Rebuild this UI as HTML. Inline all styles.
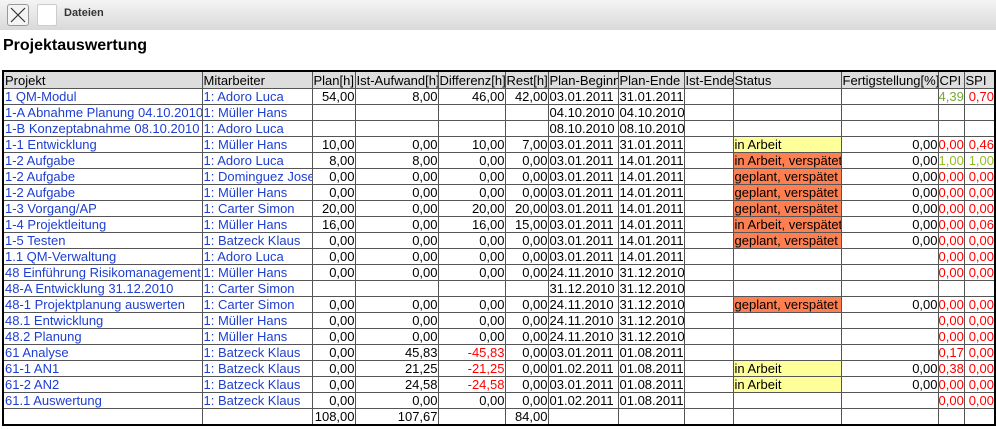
<!DOCTYPE html>
<html><head><meta charset="utf-8"><style>
body{margin:0;width:996px;height:429px;overflow:hidden;background:#fff;font-family:"Liberation Sans",sans-serif;}
.tb{position:absolute;left:0;top:0;width:996px;height:30px;background:linear-gradient(#f4f4f4,#d9d9d9);}
.x{position:absolute;left:7px;top:4px;width:20px;height:20px;border:1px solid #999;border-radius:3px;background:#f4f4f4;}
.w{position:absolute;left:37px;top:4px;width:18px;height:20px;border:1px solid #ccc;border-radius:2px;background:#fff;}
.dt{position:absolute;left:64px;top:7px;font-size:11px;font-weight:bold;color:#333;}
h1{position:absolute;left:3px;top:37px;margin:0;font-size:16px;font-weight:bold;}
table{position:absolute;left:2px;top:70px;width:994px;border-collapse:collapse;table-layout:fixed;border:2px solid #000;font-size:13px;}
td{border:1px solid #555;height:15px;padding:0 0 0 1px;line-height:15px;white-space:nowrap;overflow:hidden;}
td.r{padding:0}
tr.h td{background:#ddd;height:16px;}
.b{color:#1e3fd0}.r{text-align:right}.red{color:#f00}.g{color:#7a3}.y{color:#9b2}
.ye{background:#ffff99}.or{background:#ff7f50}
</style></head><body>
<div class="tb"><svg class="x" viewBox="0 0 20 20"><path d="M3 3L17 17M17 3L3 17" stroke="#333" stroke-width="1.2"/></svg><div class="w"></div><div class="dt">Dateien</div></div>
<h1>Projektauswertung</h1>
<table>
<colgroup><col style="width:199px"><col style="width:110px"><col style="width:43px"><col style="width:83px"><col style="width:67px"><col style="width:43px"><col style="width:70px"><col style="width:66px"><col style="width:49px"><col style="width:108px"><col style="width:97px"><col style="width:26px"><col style="width:31px"></colgroup>
<tr class="h"><td>Projekt</td><td>Mitarbeiter</td><td>Plan[h]</td><td>Ist-Aufwand[h]</td><td>Differenz[h]</td><td>Rest[h]</td><td>Plan-Beginn</td><td>Plan-Ende</td><td>Ist-Ende</td><td>Status</td><td>Fertigstellung[%]</td><td>CPI</td><td>SPI</td></tr>
<tr><td class="b">1 QM-Modul</td><td class="b">1: Adoro Luca</td><td class="r">54,00</td><td class="r">8,00</td><td class="r">46,00</td><td class="r">42,00</td><td>03.01.2011</td><td>31.01.2011</td><td></td><td></td><td></td><td class="r g">4,39</td><td class="r red">0,70</td></tr>
<tr><td class="b">1-A Abnahme Planung 04.10.2010</td><td class="b">1: Müller Hans</td><td></td><td></td><td></td><td></td><td>04.10.2010</td><td>04.10.2010</td><td></td><td></td><td></td><td></td><td></td></tr>
<tr><td class="b">1-B Konzeptabnahme 08.10.2010</td><td class="b">1: Adoro Luca</td><td></td><td></td><td></td><td></td><td>08.10.2010</td><td>08.10.2010</td><td></td><td></td><td></td><td></td><td></td></tr>
<tr><td class="b">1-1 Entwicklung</td><td class="b">1: Müller Hans</td><td class="r">10,00</td><td class="r">0,00</td><td class="r">10,00</td><td class="r">7,00</td><td>03.01.2011</td><td>31.01.2011</td><td></td><td class="ye">in Arbeit</td><td class="r">0,00</td><td class="r red">0,00</td><td class="r red">0,46</td></tr>
<tr><td class="b">1-2 Aufgabe</td><td class="b">1: Adoro Luca</td><td class="r">8,00</td><td class="r">8,00</td><td class="r">0,00</td><td class="r">0,00</td><td>03.01.2011</td><td>14.01.2011</td><td></td><td class="or">in Arbeit, verspätet</td><td class="r">0,00</td><td class="r y">1,00</td><td class="r y">1,00</td></tr>
<tr><td class="b">1-2 Aufgabe</td><td class="b">1: Dominguez Jose</td><td class="r">0,00</td><td class="r">0,00</td><td class="r">0,00</td><td class="r">0,00</td><td>03.01.2011</td><td>14.01.2011</td><td></td><td class="or">geplant, verspätet</td><td class="r">0,00</td><td class="r red">0,00</td><td class="r red">0,00</td></tr>
<tr><td class="b">1-2 Aufgabe</td><td class="b">1: Müller Hans</td><td class="r">0,00</td><td class="r">0,00</td><td class="r">0,00</td><td class="r">0,00</td><td>03.01.2011</td><td>14.01.2011</td><td></td><td class="or">geplant, verspätet</td><td class="r">0,00</td><td class="r red">0,00</td><td class="r red">0,00</td></tr>
<tr><td class="b">1-3 Vorgang/AP</td><td class="b">1: Carter Simon</td><td class="r">20,00</td><td class="r">0,00</td><td class="r">20,00</td><td class="r">20,00</td><td>03.01.2011</td><td>14.01.2011</td><td></td><td class="or">geplant, verspätet</td><td class="r">0,00</td><td class="r red">0,00</td><td class="r red">0,00</td></tr>
<tr><td class="b">1-4 Projektleitung</td><td class="b">1: Müller Hans</td><td class="r">16,00</td><td class="r">0,00</td><td class="r">16,00</td><td class="r">15,00</td><td>03.01.2011</td><td>14.01.2011</td><td></td><td class="or">in Arbeit, verspätet</td><td class="r">0,00</td><td class="r red">0,00</td><td class="r red">0,06</td></tr>
<tr><td class="b">1-5 Testen</td><td class="b">1: Batzeck Klaus</td><td class="r">0,00</td><td class="r">0,00</td><td class="r">0,00</td><td class="r">0,00</td><td>03.01.2011</td><td>14.01.2011</td><td></td><td class="or">geplant, verspätet</td><td class="r">0,00</td><td class="r red">0,00</td><td class="r red">0,00</td></tr>
<tr><td class="b">1.1 QM-Verwaltung</td><td class="b">1: Adoro Luca</td><td class="r">0,00</td><td class="r">0,00</td><td class="r">0,00</td><td class="r">0,00</td><td>03.01.2011</td><td>14.01.2011</td><td></td><td></td><td></td><td class="r red">0,00</td><td class="r red">0,00</td></tr>
<tr><td class="b">48 Einführung Risikomanagement</td><td class="b">1: Müller Hans</td><td class="r">0,00</td><td class="r">0,00</td><td class="r">0,00</td><td class="r">0,00</td><td>24.11.2010</td><td>31.12.2010</td><td></td><td></td><td></td><td class="r red">0,00</td><td class="r red">0,00</td></tr>
<tr><td class="b">48-A Entwicklung 31.12.2010</td><td class="b">1: Carter Simon</td><td></td><td></td><td></td><td></td><td>31.12.2010</td><td>31.12.2010</td><td></td><td></td><td></td><td></td><td></td></tr>
<tr><td class="b">48-1 Projektplanung auswerten</td><td class="b">1: Carter Simon</td><td class="r">0,00</td><td class="r">0,00</td><td class="r">0,00</td><td class="r">0,00</td><td>24.11.2010</td><td>31.12.2010</td><td></td><td class="or">geplant, verspätet</td><td class="r">0,00</td><td class="r red">0,00</td><td class="r red">0,00</td></tr>
<tr><td class="b">48.1 Entwicklung</td><td class="b">1: Müller Hans</td><td class="r">0,00</td><td class="r">0,00</td><td class="r">0,00</td><td class="r">0,00</td><td>24.11.2010</td><td>31.12.2010</td><td></td><td></td><td></td><td class="r red">0,00</td><td class="r red">0,00</td></tr>
<tr><td class="b">48.2 Planung</td><td class="b">1: Müller Hans</td><td class="r">0,00</td><td class="r">0,00</td><td class="r">0,00</td><td class="r">0,00</td><td>24.11.2010</td><td>31.12.2010</td><td></td><td></td><td></td><td class="r red">0,00</td><td class="r red">0,00</td></tr>
<tr><td class="b">61 Analyse</td><td class="b">1: Batzeck Klaus</td><td class="r">0,00</td><td class="r">45,83</td><td class="r red">-45,83</td><td class="r">0,00</td><td>03.01.2011</td><td>01.08.2011</td><td></td><td></td><td></td><td class="r red">0,17</td><td class="r red">0,00</td></tr>
<tr><td class="b">61-1 AN1</td><td class="b">1: Batzeck Klaus</td><td class="r">0,00</td><td class="r">21,25</td><td class="r red">-21,25</td><td class="r">0,00</td><td>01.02.2011</td><td>01.08.2011</td><td></td><td class="ye">in Arbeit</td><td class="r">0,00</td><td class="r red">0,38</td><td class="r red">0,00</td></tr>
<tr><td class="b">61-2 AN2</td><td class="b">1: Batzeck Klaus</td><td class="r">0,00</td><td class="r">24,58</td><td class="r red">-24,58</td><td class="r">0,00</td><td>03.01.2011</td><td>01.08.2011</td><td></td><td class="ye">in Arbeit</td><td class="r">0,00</td><td class="r red">0,00</td><td class="r red">0,00</td></tr>
<tr><td class="b">61.1 Auswertung</td><td class="b">1: Batzeck Klaus</td><td class="r">0,00</td><td class="r">0,00</td><td class="r">0,00</td><td class="r">0,00</td><td>01.02.2011</td><td>01.08.2011</td><td></td><td></td><td></td><td class="r red">0,00</td><td class="r red">0,00</td></tr>
<tr><td></td><td></td><td class="r">108,00</td><td class="r">107,67</td><td></td><td class="r">84,00</td><td></td><td></td><td></td><td></td><td></td><td></td><td></td></tr>
</table>
</body></html>
